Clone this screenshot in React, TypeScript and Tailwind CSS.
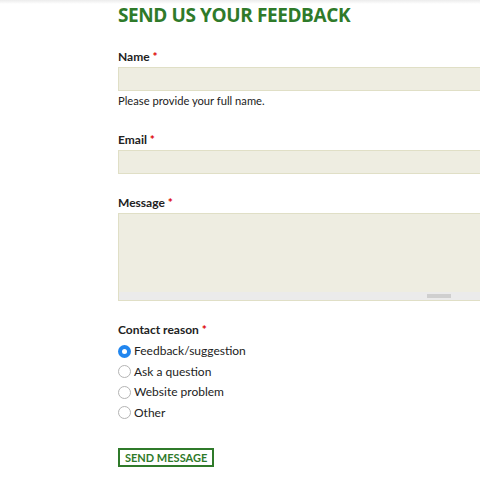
export default function App() {
  const reasons = ["Feedback/suggestion", "Ask a question", "Website problem", "Other"]

  return (
    <div className="relative h-[480px] w-[480px] overflow-hidden bg-white font-['Lato',sans-serif] text-[#222]">
      {/* faint top shadow */}
      <div className="absolute left-0 right-0 top-0 h-[4px] bg-gradient-to-b from-[#ececec] to-transparent"></div>

      <div className="pl-[118px] pt-[2px]">
        <h2 className="font-['Open_Sans',sans-serif] text-[19px] font-bold leading-[26px] tracking-[-0.4px] text-[#2f7a2a]">
          SEND US YOUR FEEDBACK
        </h2>

        <div className="mt-[21px]">
          <label className="block text-[12px] font-bold leading-[16px]">
            Name <span className="text-[#d00]">*</span>
          </label>
          <div className="mt-[2px] h-[24px] w-[400px] border border-[#e0dfc6] bg-[#eeede1]"></div>
          <p className="mt-[2px] text-[11.2px] leading-[16px]">Please provide your full name.</p>
        </div>

        <div className="mt-[23px]">
          <label className="block text-[12px] font-bold leading-[16px]">
            Email <span className="text-[#d00]">*</span>
          </label>
          <div className="mt-[2px] h-[24px] w-[400px] border border-[#e0dfc6] bg-[#eeede1]"></div>
        </div>

        <div className="mt-[21px]">
          <label className="block text-[12px] font-bold leading-[16px]">
            Message <span className="text-[#d00]">*</span>
          </label>
          <div className="mt-[2px] w-[400px] border border-[#e0dfc6] bg-[#eeede1]">
            <div className="h-[78px]"></div>
            <div className="flex h-[8px] items-center bg-[#ebebeb]">
              <div className="ml-[308px] h-[4px] w-[24px] bg-[#cfcfcf]"></div>
            </div>
          </div>
        </div>

        <div className="mt-[21px]">
          <label className="block text-[12px] font-bold leading-[16px]">
            Contact reason <span className="text-[#d00]">*</span>
          </label>
          <div className="mt-[3px] flex flex-col">
            {reasons.map((r, i) => (
              <div key={r} className="flex h-[20.5px] items-center gap-[2px] text-[12px]">
                {i === 0 ? (
                  <span className="flex h-[13px] w-[13px] items-center justify-center rounded-full bg-[#2186ef]">
                    <span className="h-[5px] w-[5px] rounded-full bg-white"></span>
                  </span>
                ) : (
                  <span className="h-[13px] w-[13px] rounded-full border border-[#b4b4b4] bg-white"></span>
                )}
                <span className="ml-[1px]">{r}</span>
              </div>
            ))}
          </div>
        </div>

        <button className="mt-[25px] h-[19px] border-2 border-[#2f7a2a] bg-white px-[5px] text-[11px] font-bold leading-[14px] text-[#2f7a2a]">
          SEND MESSAGE
        </button>
      </div>
    </div>
  )
}
